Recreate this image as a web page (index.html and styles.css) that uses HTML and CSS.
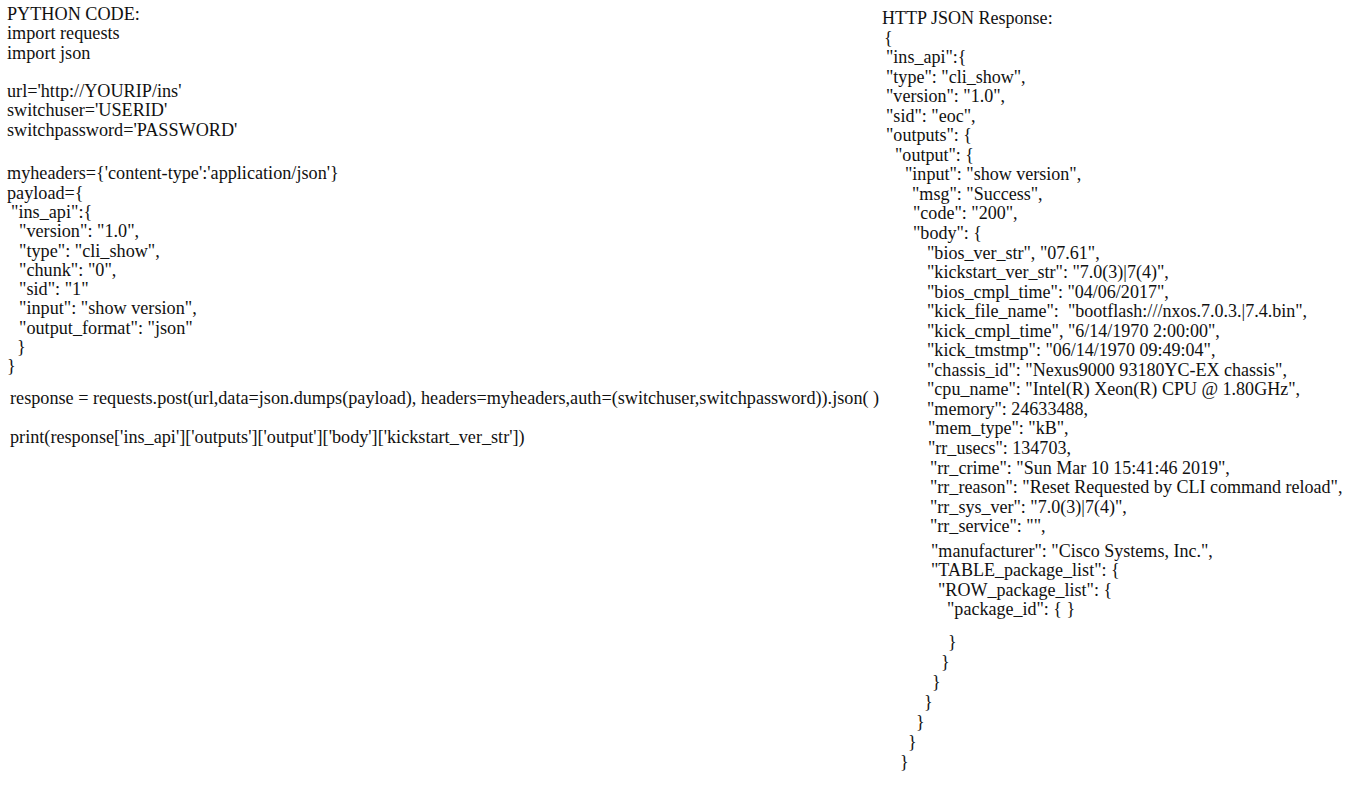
FILE: index.html
```html
<!DOCTYPE html>
<html>
<head>
<meta charset="utf-8">
<link rel="stylesheet" href="styles.css">
</head>
<body>
<main class="page">
  <section class="col left">
    <div class="ln">PYTHON CODE:</div>
    <div class="ln">import requests</div>
    <div class="ln">import json</div>
    <div class="ln blank"></div>
    <div class="ln">url='http://YOURIP/ins'</div>
    <div class="ln">switchuser='USERID'</div>
    <div class="ln">switchpassword='PASSWORD'</div>
    <div class="ln blank gap5"></div>
    <div class="ln">myheaders={'content-type':'application/json'}</div>
    <div class="ln">payload={</div>
    <div class="ln l1">"ins_api":{</div>
    <div class="ln l2">"version": "1.0",</div>
    <div class="ln l2">"type": "cli_show",</div>
    <div class="ln l2">"chunk": "0",</div>
    <div class="ln l2">"sid": "1"</div>
    <div class="ln l2">"input": "show version",</div>
    <div class="ln l2">"output_format": "json"</div>
    <div class="ln l1b">}</div>
    <div class="ln">}</div>
    <div class="ln l3 sp1">response = requests.post(url,data=json.dumps(payload), headers=myheaders,auth=(switchuser,switchpassword)).json( )</div>
    <div class="ln l3 sp2">print(response['ins_api']['outputs']['output']['body']['kickstart_ver_str'])</div>
  </section>
  <section class="col right">
    <div class="rl">HTTP JSON Response:</div>
    <div class="rl r1">{</div>
    <div class="rl r2">"ins_api":{</div>
    <div class="rl r2">"type": "cli_show",</div>
    <div class="rl r2">"version": "1.0",</div>
    <div class="rl r2">"sid": "eoc",</div>
    <div class="rl r2">"outputs": {</div>
    <div class="rl r3">"output": {</div>
    <div class="rl r4">"input": "show version",</div>
    <div class="rl r5">"msg": "Success",</div>
    <div class="rl r6">"code": "200",</div>
    <div class="rl r6">"body": {</div>
    <div class="rl r7">"bios_ver_str", "07.61",</div>
    <div class="rl r7">"kickstart_ver_str": "7.0(3)|7(4)",</div>
    <div class="rl r7">"bios_cmpl_time": "04/06/2017",</div>
    <div class="rl r7">"kick_file_name":  "bootflash:///nxos.7.0.3.|7.4.bin",</div>
    <div class="rl r7">"kick_cmpl_time", "6/14/1970 2:00:00",</div>
    <div class="rl r7">"kick_tmstmp": "06/14/1970 09:49:04",</div>
    <div class="rl r7">"chassis_id": "Nexus9000 93180YC-EX chassis",</div>
    <div class="rl r7">"cpu_name": "Intel(R) Xeon(R) CPU @ 1.80GHz",</div>
    <div class="rl r7">"memory": 24633488,</div>
    <div class="rl r8">"mem_type": "kB",</div>
    <div class="rl r8">"rr_usecs": 134703,</div>
    <div class="rl r9">"rr_crime": "Sun Mar 10 15:41:46 2019",</div>
    <div class="rl r9">"rr_reason": "Reset Requested by CLI command reload",</div>
    <div class="rl r9">"rr_sys_ver": "7.0(3)|7(4)",</div>
    <div class="rl r9">"rr_service": "",</div>
    <div class="rl r10 gapm">"manufacturer": "Cisco Systems, Inc.",</div>
    <div class="rl r10">"TABLE_package_list": {</div>
    <div class="rl r11">"ROW_package_list": {</div>
    <div class="rl r12">"package_id": { }</div>
    <div class="rl br b1 gapb">}</div>
    <div class="rl br b2">}</div>
    <div class="rl br b3">}</div>
    <div class="rl br b4">}</div>
    <div class="rl br b5">}</div>
    <div class="rl br b6">}</div>
    <div class="rl br b7">}</div>
  </section>
</main>
</body>
</html>
```

FILE: styles.css
```css
html, body {
  margin: 0;
  padding: 0;
  background: #ffffff;
}

body {
  font-family: "Liberation Serif", "Times New Roman", serif;
  color: #111111;
}

.page {
  display: flex;
  align-items: flex-start;
  padding: 0;
}

.col {
  display: flex;
  flex-direction: column;
}

.left {
  width: 875px;
  padding-left: 7px;
  padding-top: 5px;
  font-size: 18.2px;
}

.right {
  padding-top: 9px;
  font-size: 18.05px;
}

.ln {
  line-height: 19.3px;
  height: 19.3px;
  white-space: pre;
}

.rl {
  line-height: 19.55px;
  height: 19.55px;
  white-space: pre;
}

.rl.br {
  line-height: 20px;
  height: 20px;
}

.gap5 { margin-top: 5px; }

.l1 { padding-left: 4px; }
.l2 { padding-left: 12px; }
.l1b { padding-left: 10px; }
.l3 { padding-left: 3px; }
.sp1 { margin-top: 12px; }
.sp2 { margin-top: 20px; }

.r1 { padding-left: 2px; }
.r2 { padding-left: 4px; }
.r3 { padding-left: 13px; }
.r4 { padding-left: 23px; }
.r5 { padding-left: 30px; }
.r6 { padding-left: 31px; }
.r7 { padding-left: 45px; }
.r8 { padding-left: 46px; }
.r9 { padding-left: 48px; }
.r10 { padding-left: 49px; }
.r11 { padding-left: 56px; }
.r12 { padding-left: 65px; }
.b1 { padding-left: 66px; }
.b2 { padding-left: 59px; }
.b3 { padding-left: 50px; }
.b4 { padding-left: 42px; }
.b5 { padding-left: 34px; }
.b6 { padding-left: 26px; }
.b7 { padding-left: 18px; }

.gapm { margin-top: 5px; }
.gapb { margin-top: 12px; }
```
